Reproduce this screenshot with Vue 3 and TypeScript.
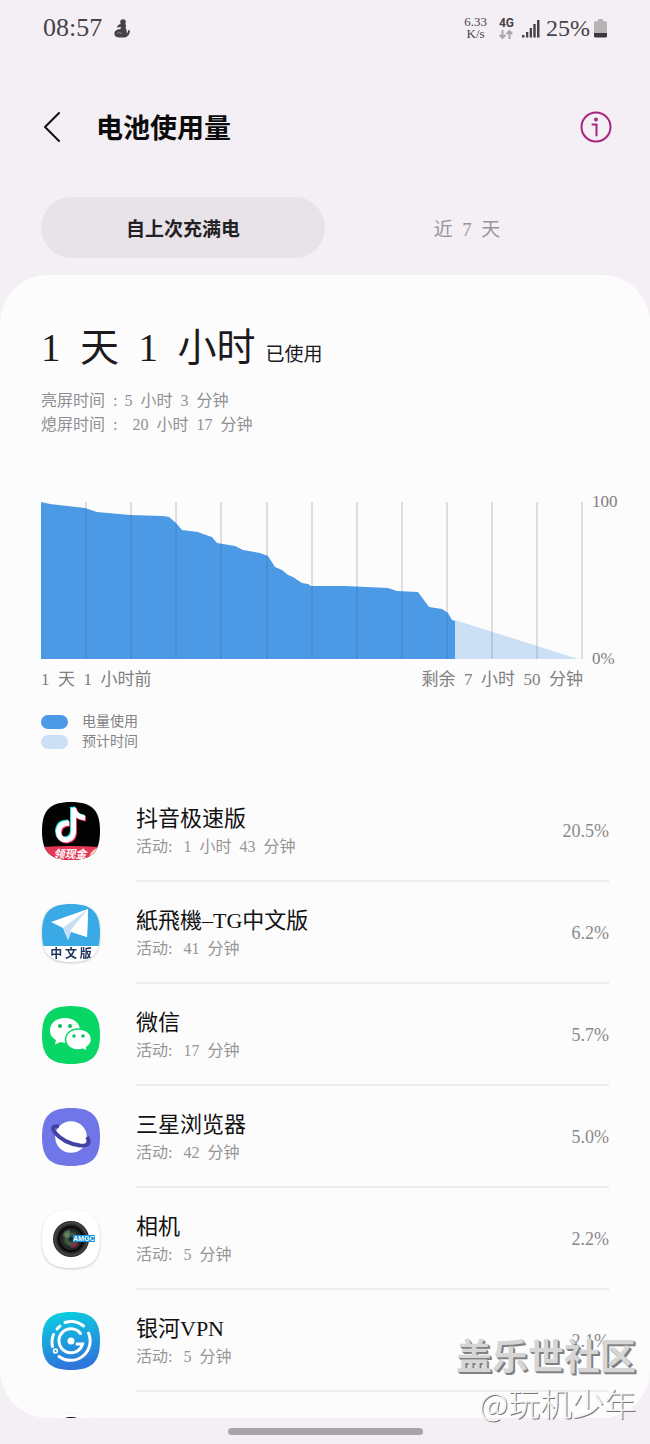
<script setup lang="ts">
import { ref } from 'vue'

type IconName = 'douyin' | 'telegram' | 'wechat' | 'browser' | 'camera' | 'vpn'

interface AppUsage {
  icon: IconName
  name: string
  active: string
  percent: string
}

const period = ref<'charge' | 'week'>('charge')

const apps: AppUsage[] = [
  { icon: 'douyin', name: '抖音极速版', active: '1\u2002小时\u200243\u2002分钟', percent: '20.5%' },
  { icon: 'telegram', name: '紙飛機–TG中文版', active: '41\u2002分钟', percent: '6.2%' },
  { icon: 'wechat', name: '微信', active: '17\u2002分钟', percent: '5.7%' },
  { icon: 'browser', name: '三星浏览器', active: '42\u2002分钟', percent: '5.0%' },
  { icon: 'camera', name: '相机', active: '5\u2002分钟', percent: '2.2%' },
  { icon: 'vpn', name: '银河VPN', active: '5\u2002分钟', percent: '2.1%' },
]

// Battery level curve in chart units: x 0–542, y 0 (100%) – 157 (0%).
const levels: [number, number][] = [
  [0, 0], [9, 2], [44, 6], [56, 10], [89, 13], [122, 14], [128, 15], [135, 21], [141, 28],
  [157, 30], [162, 32], [171, 35], [176, 41], [194, 44], [202, 48], [219, 51], [227, 54],
  [234, 65], [241, 68], [247, 73], [252, 75], [261, 81], [267, 82], [270, 84], [304, 84],
  [347, 86], [356, 89], [377, 90], [388, 105], [401, 107], [407, 111], [411, 118], [414, 119],
]
const usedArea = `M0 157L${levels.map((p) => p.join(' ')).join('L')}V157Z`
const gridLines = Array.from({ length: 12 }, (_, i) => Math.round((i + 1) * 45.1))
const squircle = 'M29 0C50 0 58 8 58 29S50 58 29 58 0 50 0 29 8 0 29 0Z'
</script>

<template>
  <div class="screen">
    <header class="status">
      <div class="status-left">
        <time>08:57</time>
        <svg class="seated" viewBox="0 0 16 19" aria-hidden="true">
          <circle cx="9" cy="3" r="2.800" />
          <path d="M6.800 5Q3 6 3 8.500L7 8Q7.500 9 6 10Q1 10.500 .4 14Q0 18 5 18.500H11Q15.800 17 16 11.500L14.300 11Q14 14.200 12.800 14.500Q13.500 11 11.500 9Q13 6 10.500 4.500Z" />
          <path d="M3 14.500Q5.500 12.500 7.500 14.500" class="seated-line" />
        </svg>
      </div>
      <div class="status-right">
        <div class="speed"><span>6.33</span><span>K/s</span></div>
        <div class="net">
          <span>4G</span>
          <svg viewBox="0 0 14 9" aria-hidden="true">
            <path d="M3.500 0V8M.7 4.800 3.500 8 6.300 4.800M10.500 9V1M7.700 4.200 10.500 1 13.300 4.200" />
          </svg>
        </div>
        <svg class="signal" viewBox="0 0 18 19" aria-hidden="true">
          <path d="M0 16h2.500v2.500H0zM4 13h2.300v5.500H4zM7.700 9h2.300v9.500H7.700zM11.300 5h2.400v13.500h-2.400zM15 1h2.500v17.500H15z" />
        </svg>
        <span class="level">25%</span>
        <svg class="battery" viewBox="0 0 13 19" aria-hidden="true">
          <path d="M4 0h5v2h2q2 0 2 2v10H0V4q0-2 2-2h2z" fill="#b8b4b6" />
          <path d="M0 14h13v3q0 1.500-1.500 1.500h-10Q0 18.500 0 17z" fill="#3c383b" />
        </svg>
      </div>
    </header>

    <div class="title-bar">
      <button class="icon-button back" type="button" aria-label="返回">
        <svg viewBox="0 0 18 32"><path d="M16 2 2 16 16 30" /></svg>
      </button>
      <h1>电池使用量</h1>
      <button class="icon-button info" type="button" aria-label="信息">
        <svg viewBox="0 0 32 32">
          <circle cx="16" cy="16" r="14.500" />
          <path d="M12.500 13.500H16.500V24.500" />
          <circle class="dot" cx="16" cy="8.500" r="1.900" />
        </svg>
      </button>
    </div>

    <div class="tabs" role="tablist">
      <button type="button" role="tab" :aria-selected="period === 'charge'" @click="period = 'charge'">自上次充满电</button>
      <button type="button" role="tab" :aria-selected="period === 'week'" @click="period = 'week'">近&ensp;7&ensp;天</button>
    </div>

    <main class="card">
      <section class="summary">
        <p class="total"><strong>1&ensp;天&ensp;1&ensp;小时</strong><span>已使用</span></p>
        <p class="detail"><span class="label">亮屏时间&ensp;: </span>5&ensp;小时&ensp;3&ensp;分钟</p>
        <p class="detail"><span class="label">熄屏时间&ensp;: </span>&ensp;20&ensp;小时&ensp;17&ensp;分钟</p>
      </section>

      <section class="chart">
        <svg class="plot" viewBox="0 0 542 157" preserveAspectRatio="none" role="img" aria-label="电量使用">
          <defs><clipPath id="level-clip"><path :d="usedArea" /><path d="M414 118 537 157H414Z" /></clipPath></defs>
          <path v-for="x in gridLines" :key="x" class="grid" :d="`M${x} 0V157`" />
          <path class="forecast" d="M414 118 537 157H414Z" />
          <path class="used" :d="usedArea" />
          <g clip-path="url(#level-clip)">
            <path v-for="x in gridLines" :key="x" class="grid-under" :d="`M${x} 0V157`" />
          </g>
        </svg>
        <div class="axis"><span>100</span><span>0%</span></div>
        <div class="range"><span>1&ensp;天&ensp;1&ensp;小时前</span><span>剩余&ensp;7&ensp;小时&ensp;50&ensp;分钟</span></div>
      </section>

      <ul class="legend">
        <li><i class="used-key"></i>电量使用</li>
        <li><i class="forecast-key"></i>预计时间</li>
      </ul>

      <ul class="apps">
        <li v-for="app in apps" :key="app.name">
          <svg class="app-icon" :class="{ outlined: app.icon === 'camera' || app.icon === 'telegram' }" viewBox="0 0 58 58" aria-hidden="true">
            <defs>
              <clipPath :id="`clip-${app.icon}`"><path :d="squircle" /></clipPath>
              <linearGradient id="vpn-fill" x1="0" y1="0" x2="0.2" y2="1">
                <stop offset="0" stop-color="#08d4df" /><stop offset="1" stop-color="#2e75dc" />
              </linearGradient>
              <radialGradient id="lens-fill">
                <stop offset="0" stop-color="#0d1512" /><stop offset=".25" stop-color="#48654c" />
                <stop offset=".5" stop-color="#192620" /><stop offset=".62" stop-color="#35262a" />
                <stop offset=".7" stop-color="#151515" /><stop offset=".9" stop-color="#464646" />
                <stop offset="1" stop-color="#242424" />
              </radialGradient>
            </defs>
            <g :clip-path="`url(#clip-${app.icon})`">
              <template v-if="app.icon === 'douyin'">
                <rect width="58" height="58" fill="#020202" />
                <g fill="none" stroke-width="5">
                  <path stroke="#25e8e1" d="M26 20Q16 20 15.500 29 16 37 23.500 37 30 36 30.500 29V5Q32 14 42 15" />
                  <path stroke="#f6345c" d="M28 22Q18 22 17.500 31 18 39 25.500 39 32 38 32.500 31V7Q34 16 44 17" />
                  <path stroke="#fff" d="M27 21Q17 21 16.500 30 17 38 24.500 38 31 37 31.500 30V6Q33 15 43 16" />
                </g>
                <path d="M0 45Q29 43 58 45V58H0Z" fill="#e53855" />
                <path d="M48 58Q46 50 55 46L58 48V58Z" fill="#f9dcc5" />
                <path d="M50 57 54 49" stroke="#e58b57" stroke-width="2" />
                <text class="badge-text" x="28" y="56" fill="#fff">领现金</text>
              </template>
              <template v-else-if="app.icon === 'telegram'">
                <rect width="58" height="58" fill="#fff" />
                <rect width="58" height="42" fill="#39aae6" />
                <path d="M9 18 46 5 45 33 29 28 26 36 21 24Z" fill="#fff" />
                <path d="M21 24 46 5 29 28 26 36Z" fill="#c5dff4" />
                <path d="M28 27 46 5 45 33Z" fill="#fff" />
                <text class="edition-text" x="29" y="54" fill="#20345d">中 文 版</text>
              </template>
              <template v-else-if="app.icon === 'wechat'">
                <rect width="58" height="58" fill="#08d766" />
                <path d="M23 12C14 12 8 17 8 24.500 8 29 10.500 32 14 34L13 38.500 18.500 36 23 37C32 37 38 32 38 24.500S32 12 23 12Z" fill="#fff" />
                <circle cx="18" cy="20" r="2" fill="#08bd5b" /><circle cx="28" cy="20" r="2" fill="#08bd5b" />
                <path d="M36.500 23C29 23 23.500 27.500 23.500 33.500S29 44 36.500 44L41 43.200 45.500 45.500 44.500 41.500C47.500 39.500 49.500 37 49.500 33.500 49.500 27.500 44 23 36.500 23Z" fill="#fff" stroke="#08d766" stroke-width="1.500" />
                <circle cx="32" cy="30" r="1.700" fill="#08bd5b" /><circle cx="41" cy="30" r="1.700" fill="#08bd5b" />
              </template>
              <template v-else-if="app.icon === 'browser'">
                <rect width="58" height="58" fill="#7075e8" />
                <circle cx="29" cy="29" r="15.800" fill="#fff" />
                <path d="M17 18.500Q8 17 12.500 24 21 35 38 37.500 51 38 45 29" fill="none" stroke="#4143a0" stroke-width="3.800" />
              </template>
              <template v-else-if="app.icon === 'camera'">
                <rect width="58" height="58" fill="#fff" />
                <circle cx="29" cy="29" r="18" fill="url(#lens-fill)" />
                <circle cx="29" cy="29" r="12" fill="none" stroke="#0b0b0b" stroke-width="2" />
                <path d="M21 26Q22 20 28 20L27 28Z" fill="#79a279" opacity=".6" />
                <path d="M29 33Q35 32 37 34 34 38 29 38Z" fill="#88304d" opacity=".8" />
                <rect x="31" y="25" width="22" height="7" rx="1" fill="#1594dc" />
                <text class="lens-text" x="42" y="31" fill="#fff">AMGC</text>
              </template>
              <template v-else>
                <rect width="58" height="58" fill="url(#vpn-fill)" />
                <g fill="none" stroke="#fff" stroke-width="3" stroke-linecap="round">
                  <path d="M23 10.500A19.500 19.500 0 0 1 41.500 14M46.500 21A19.500 19.500 0 0 1 17 44.500M15 17 18 14M10.500 34.500A19.500 19.500 0 0 1 11.500 22.500" />
                  <path d="M38.500 21.500A12 12 0 1 0 40.500 32H35" />
                  <circle cx="13.500" cy="39" r="1.900" stroke-width="1.600" />
                </g>
                <circle cx="29" cy="29" r="3.500" fill="#fff" />
              </template>
            </g>
          </svg>
          <div class="app-row">
            <div class="app-text">
              <h2>{{ app.name }}</h2>
              <p><span class="label">活动:&ensp;</span>{{ app.active }}</p>
            </div>
            <span class="percent">{{ app.percent }}</span>
          </div>
        </li>
        <li>
          <svg class="app-icon outlined" viewBox="0 0 58 58" aria-hidden="true">
            <path :d="squircle" fill="#fff" /><circle cx="29" cy="22" r="19" fill="#111" />
          </svg>
        </li>
      </ul>
    </main>

    <div class="nav"><i></i></div>
    <div class="watermark"><b>盖乐世社区</b><span>@玩机少年</span></div>
  </div>
</template>

<style>
body {
  margin: 0;
  background: #f4eff5;
}
</style>

<style scoped>
.screen {
  position: relative;
  box-sizing: border-box;
  display: flex;
  flex-direction: column;
  height: 100vh;
  background: #f4eff5;
  color: #1c1a1c;
  font-family: "Liberation Serif", "Noto Sans CJK SC", serif;
}
h1, h2, p, ul {
  margin: 0;
  padding: 0;
  font-weight: 400;
}
ul { list-style: none; }
button {
  padding: 0;
  border: 0;
  background: none;
  color: inherit;
  font: inherit;
  cursor: pointer;
}
svg { display: block; flex: none; }

.status {
  display: flex;
  justify-content: space-between;
  align-items: center;
  height: 56px;
  padding: 0 43px;
  color: #464246;
}
.status-left, .status-right { display: flex; align-items: center; }
.status-left { gap: 12px; font-size: 26px; }
.seated { width: 16px; height: 19px; fill: #464246; }
.seated-line { fill: none; stroke: #8a868a; stroke-width: 1; }
.speed {
  display: flex;
  flex-direction: column;
  align-items: center;
  margin-right: 12px;
  font-size: 13px;
  line-height: 12px;
}
.net {
  display: flex;
  flex-direction: column;
  align-items: center;
  gap: 1px;
  margin-right: 8px;
  font: 700 12px/12px Roboto, sans-serif;
}
.net svg { width: 14px; height: 9px; fill: none; stroke: #aaa6a9; stroke-width: 2; }
.signal { width: 18px; height: 19px; margin-right: 6px; fill: #464246; }
.level { margin-right: 4px; font-size: 24px; }
.battery { width: 13px; height: 19px; }

.title-bar {
  display: flex;
  align-items: center;
  height: 141px;
  padding: 0 38px 0 43px;
}
.icon-button svg { fill: none; stroke-width: 2; stroke-linecap: round; stroke-linejoin: round; }
.back svg { width: 18px; height: 32px; stroke: #111; }
.info svg { width: 32px; height: 32px; stroke: #a8257f; }
.info .dot { fill: #a8257f; stroke: none; }
h1 {
  flex: 1;
  margin-left: 35px;
  color: #0c0b0c;
  font-size: 27px;
  font-weight: 700;
}

.tabs {
  display: grid;
  grid-template-columns: 1fr 1fr;
  height: 61px;
  margin: 0 41px 17px;
}
.tabs button { border-radius: 31px; color: #98949a; font-size: 19px; }
.tabs button[aria-selected="true"] { background: #e8e3e8; color: #242124; font-weight: 700; }

.card {
  flex: 1;
  min-height: 0;
  overflow: hidden;
  border-radius: 48px;
  background: #fcfcfc;
}
.summary { padding: 45px 41px 0; }
.total {
  display: flex;
  align-items: baseline;
  gap: 10px;
  margin-bottom: 6px;
  line-height: 56px;
}
.total strong { font-size: 39px; font-weight: 400; }
.total span { font-size: 19px; }
.detail { color: #929092; font-size: 16px; line-height: 24px; }
.label { margin-right: 3px; }

.chart {
  display: grid;
  grid-template-columns: 1fr 25px;
  column-gap: 9px;
  margin: 65px 33px 0 41px;
  color: #807e80;
  font-size: 17px;
}
.plot { width: 100%; height: 157px; overflow: visible; }
.grid { fill: none; stroke: #dedede; stroke-width: 2; }
.grid-under { fill: none; stroke: rgb(40 90 150 / 16%); stroke-width: 2; }
.forecast { fill: #cbe0f5; }
.used { fill: #4c99e5; }
.axis {
  display: flex;
  flex-direction: column;
  justify-content: space-between;
  margin: -10px 0;
  line-height: 20px;
}
.range {
  display: flex;
  justify-content: space-between;
  margin-top: 9px;
  line-height: 24px;
}

.legend {
  margin: 20px 41px 0;
  color: #858385;
  font-size: 14px;
  line-height: 20px;
}
.legend li { display: flex; align-items: center; gap: 14px; }
.legend i { width: 27px; height: 14px; border-radius: 7px; }
.used-key { background: #4c99e5; }
.forecast-key { background: #cbe0f5; }

.apps { padding: 28px 41px 0; }
.apps li { display: flex; align-items: flex-start; gap: 36px; }
.app-icon { width: 58px; height: 58px; margin: 22px 0 0 1px; overflow: visible; }
.outlined { filter: drop-shadow(0 1px 1px #c8c8c8); }
.app-row {
  flex: 1;
  box-sizing: border-box;
  display: flex;
  align-items: center;
  height: 102px;
  padding-top: 2px;
  border-bottom: 2px solid #ececec;
}
.app-text { flex: 1; }
h2 { color: #111; font-size: 22px; line-height: 30px; }
.app-text p { color: #979597; font-size: 16px; line-height: 25px; }
.percent { color: #8a888a; font-size: 18px; }
.badge-text { font: italic 700 11px "Noto Sans CJK SC", sans-serif; text-anchor: middle; }
.edition-text { font: 700 12px "Noto Sans CJK SC", sans-serif; text-anchor: middle; }
.lens-text { font: 700 7px "Liberation Sans", sans-serif; text-anchor: middle; }

.nav { display: flex; justify-content: center; align-items: center; height: 26px; }
.nav i { width: 30%; height: 7px; border-radius: 4px; background: #a8a5a8; }

.watermark {
  position: absolute;
  right: 14px;
  bottom: 18px;
  display: flex;
  flex-direction: column;
  align-items: flex-end;
  font-family: "Noto Sans CJK SC", sans-serif;
  line-height: 48px;
  pointer-events: none;
}
.watermark b { color: #d6d6d6; font-size: 36px; text-shadow: 1px 1px #808080, 2px 2px #808080; }
.watermark span { color: #f4f4f4; font-size: 32px; font-weight: 300; text-shadow: 1px 1px #777; }
</style>
